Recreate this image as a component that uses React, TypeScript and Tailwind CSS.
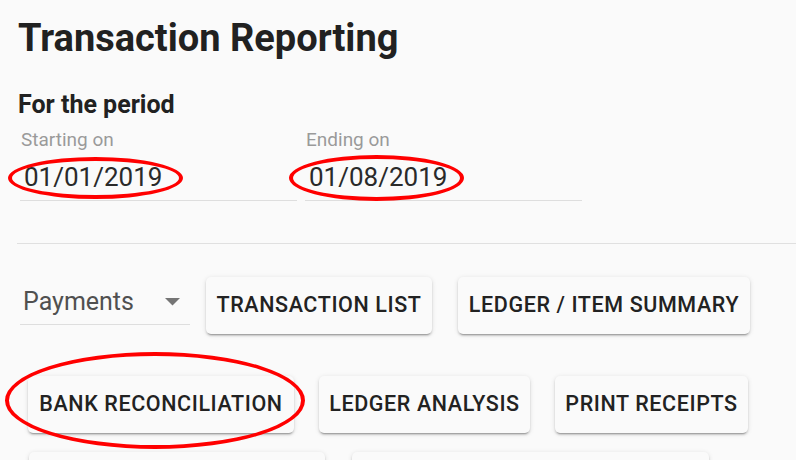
import React from "react";

const REPORTS = [
  [
    { label: "TRANSACTION LIST", w: "w-[226px]" },
    { label: "LEDGER / ITEM SUMMARY", w: "w-[292px]" },
  ],
  [
    { label: "BANK RECONCILIATION", w: "w-[266px]" },
    { label: "LEDGER ANALYSIS", w: "w-[211px]" },
    { label: "PRINT RECEIPTS", w: "w-[193px]" },
  ],
  // third row is cut off by the frame, only the tops show
  [
    { label: "", w: "w-[296px]" },
    { label: "", w: "w-[357px]" },
  ],
];

function ReportButton({ label, w }: { label: string; w: string }) {
  return (
    <button
      className={`${w} h-[57px] shrink-0 rounded-[5px] bg-[#fafafa] text-[21.5px] font-medium tracking-[0.6px] text-[#222] whitespace-nowrap shadow-[0px_3px_1px_-2px_rgba(0,0,0,0.2),0px_2px_2px_0px_rgba(0,0,0,0.14),0px_1px_5px_0px_rgba(0,0,0,0.12)]`}
    >
      {label}
    </button>
  );
}

function DateField({ label, value }: { label: string; value: string }) {
  return (
    <div className="w-[277px]">
      <div className="pl-[1px] text-[19px] leading-[22px] text-[#9a9a9a]">{label}</div>
      <div className="mt-[11px] border-b border-[#dedede] pb-[8px] pl-[4px] text-[26px] leading-[30px] text-[#2a2a2a]">
        {value}
      </div>
    </div>
  );
}

function Ellipse({ className }: { className: string }) {
  return (
    <div className={`pointer-events-none absolute rounded-[50%] border-[4px] border-[#f00] ${className}`} />
  );
}

export default function App() {
  return (
    <div className="relative h-[460px] w-[796px] overflow-hidden bg-[#fafafa] font-['Roboto',sans-serif]">
      <div className="pl-[18px] pt-[16px]">
        <h1 className="text-[38px] font-bold leading-[44px] text-[#212121]">Transaction Reporting</h1>
        <h2 className="mt-[30px] text-[25px] font-bold leading-[29px] text-[#212121]">For the period</h2>

        <div className="ml-[2px] mt-[10px] flex gap-[8px]">
          <DateField label="Starting on" value="01/01/2019" />
          <DateField label="Ending on" value="01/08/2019" />
        </div>
      </div>

      <div className="ml-[17px] mt-[42px] border-t border-[#e0e0e0]" />

      <div className="ml-[20px] mt-[33px] flex items-center gap-[16px]">
        <div className="w-[170px] border-b border-[#dedede] pb-[8px]">
          <div className="flex items-center justify-between pl-[3px] pr-[10px]">
            <span className="text-[25px] leading-[29px] text-[#505050]">Payments</span>
            <svg width="15" height="8" viewBox="0 0 15 8" className="mt-[2px]">
              <polygon points="0,0 15,0 7.5,7.5" fill="#757575" />
            </svg>
          </div>
        </div>
        <div className="flex gap-[26px]">
          {REPORTS[0].map((b) => (
            <ReportButton key={b.label} {...b} />
          ))}
        </div>
      </div>

      <div className="ml-[28px] mt-[42px] flex gap-[25px]">
        {REPORTS[1].map((b) => (
          <ReportButton key={b.label} {...b} />
        ))}
      </div>

      <div className="ml-[29px] mt-[19px] flex gap-[27px]">
        {REPORTS[2].map((b, i) => (
          <ReportButton key={i} {...b} />
        ))}
      </div>

      {/* annotation rings */}
      <Ellipse className="left-[8px] top-[157px] h-[42px] w-[175px]" />
      <Ellipse className="left-[289px] top-[155px] h-[46px] w-[175px]" />
      <Ellipse className="left-[5px] top-[352px] h-[97px] w-[300px]" />
    </div>
  );
}
